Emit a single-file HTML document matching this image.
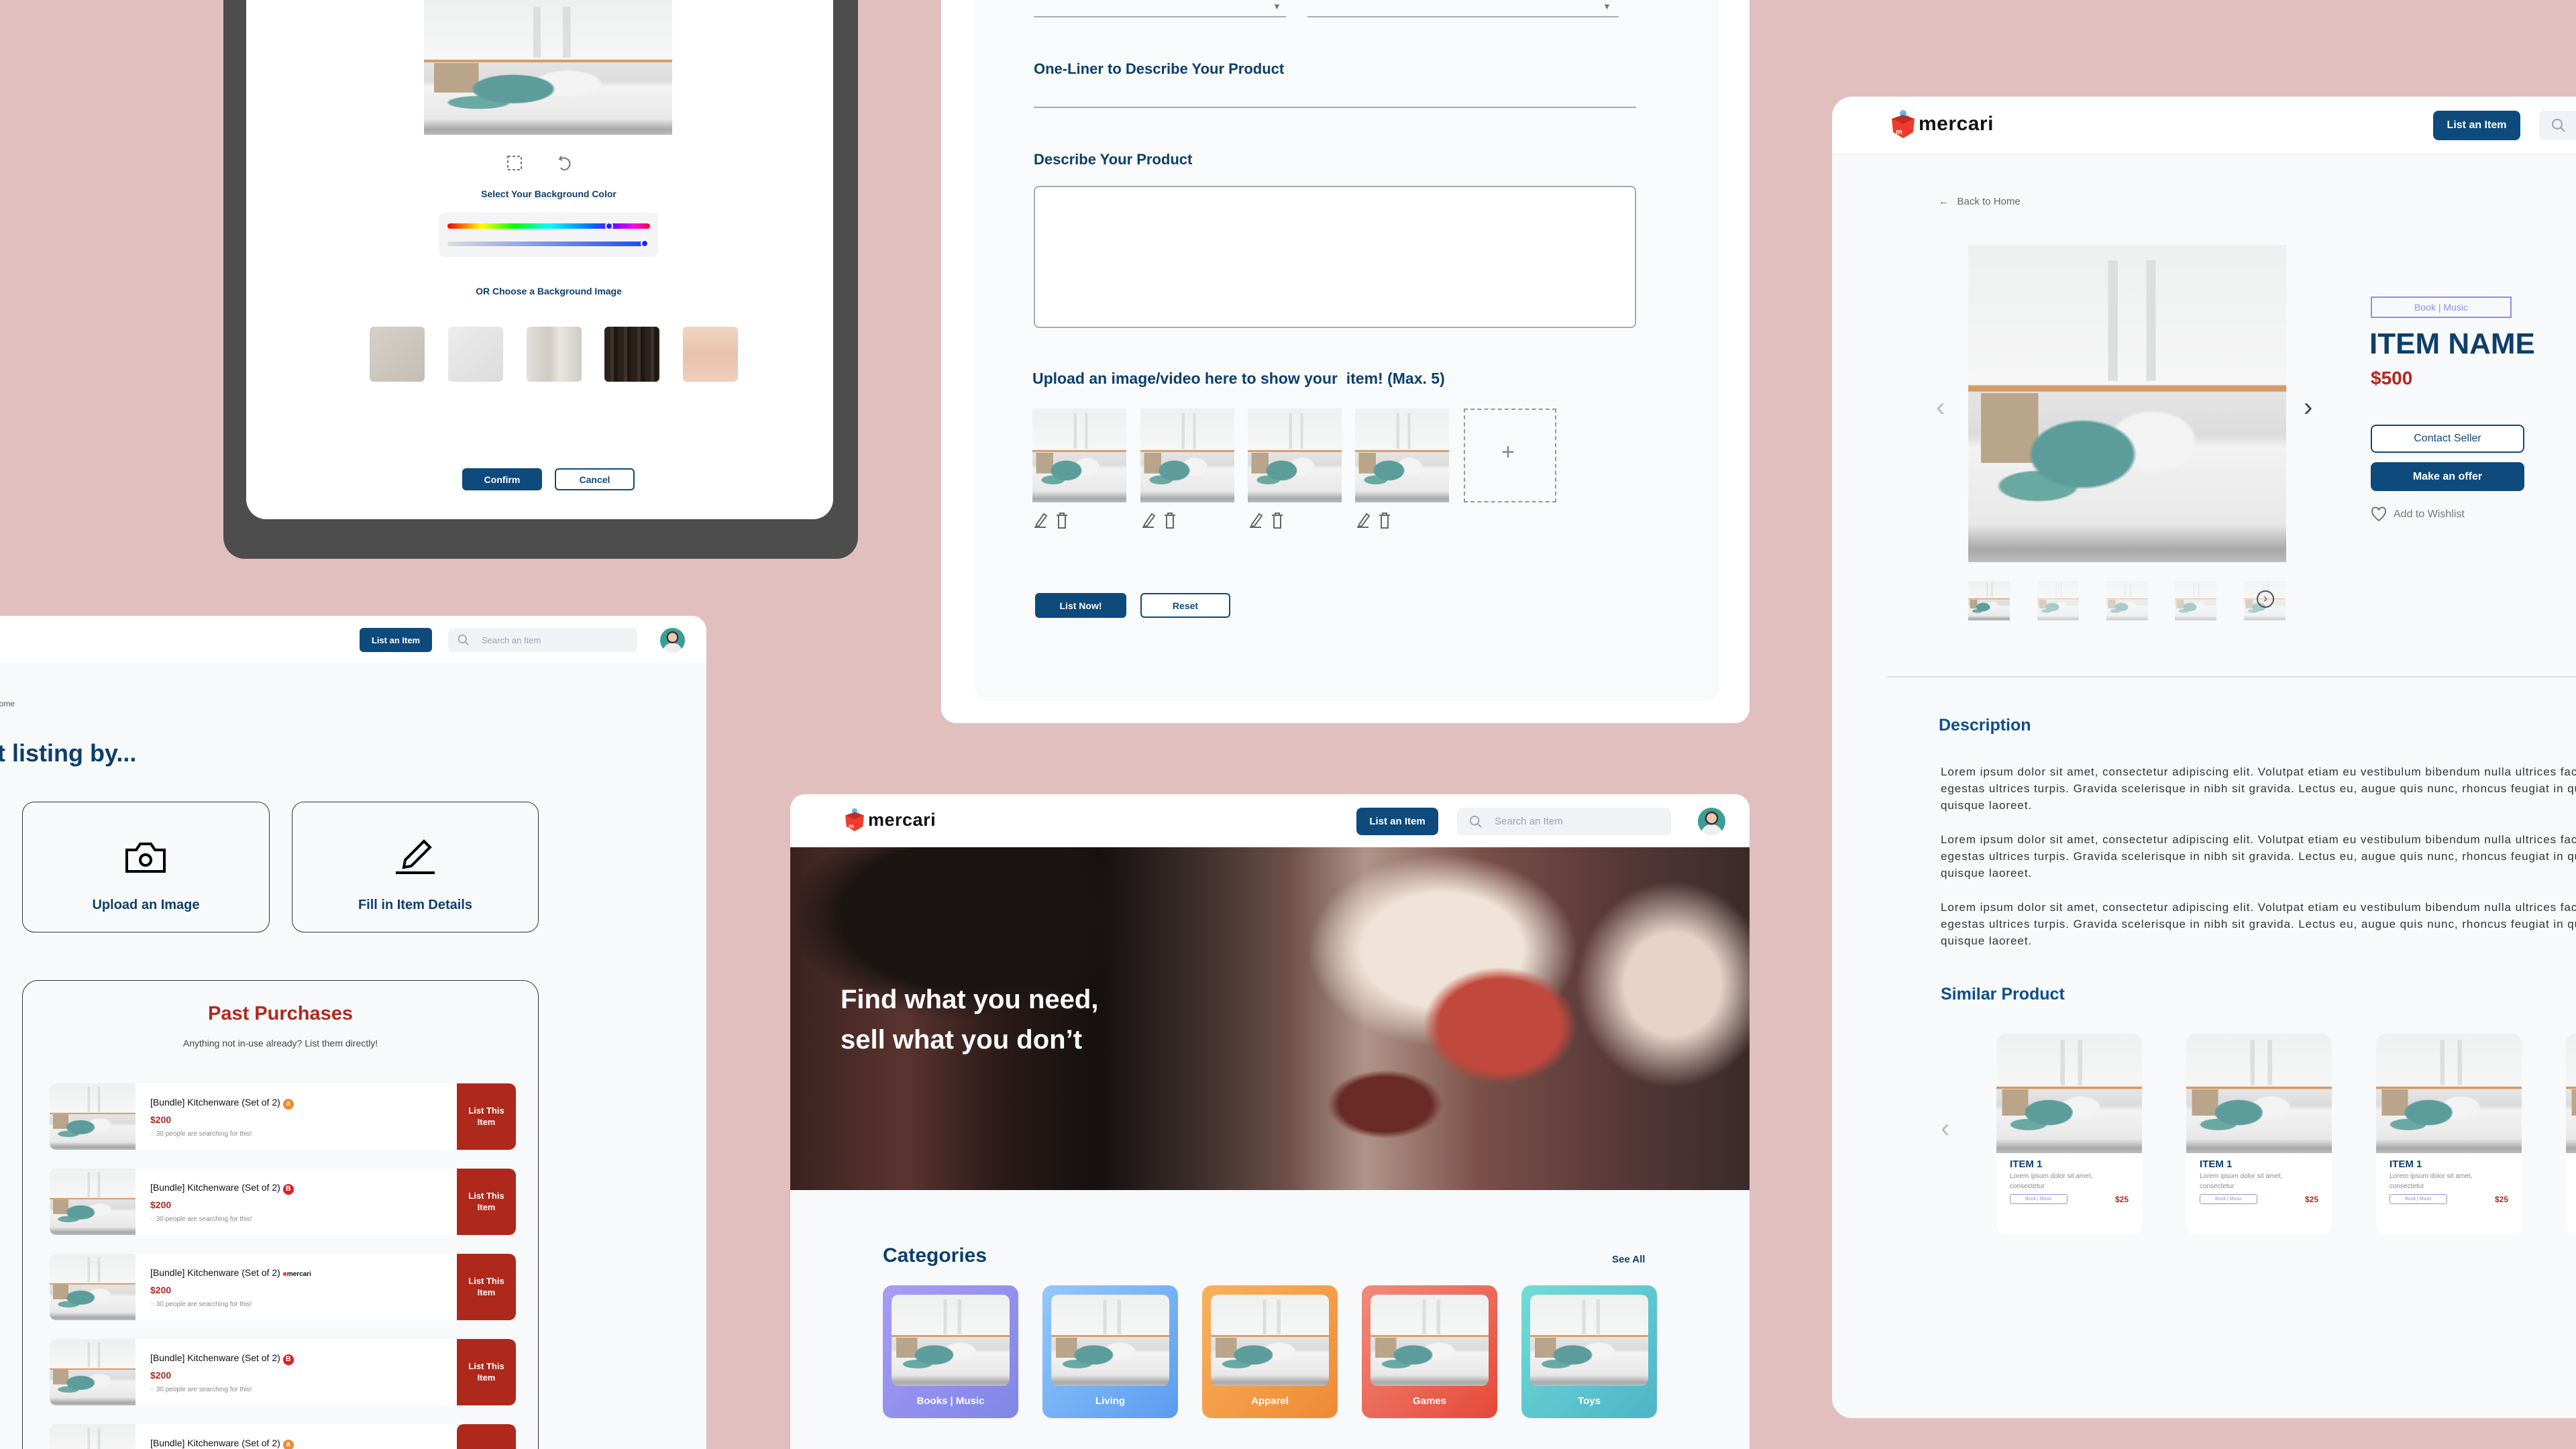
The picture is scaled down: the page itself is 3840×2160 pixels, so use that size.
<!DOCTYPE html>
<html style="width:3840px;height:2160px;overflow:hidden"><head><meta charset="utf-8">
<style>
*{margin:0;padding:0;box-sizing:border-box}
body{width:3840px;height:2160px;background:#e1bfbf;position:relative;overflow:hidden;font-family:"Liberation Sans",sans-serif;color:#0d3f6b}
#root{position:absolute;left:0;top:0;width:3840px;height:2160px;overflow:hidden}
.a{position:absolute}
.kit{background:
 radial-gradient(ellipse 17% 11% at 36% 66%,#5c9c9a 0 92%,transparent 100%),
 radial-gradient(ellipse 14% 10% at 58% 62%,#f3f3f3 0 90%,transparent 100%),
 radial-gradient(ellipse 13% 5% at 22% 76%,#6aa8a2 0 90%,transparent 100%),
 linear-gradient(90deg,transparent 0 4%,#b8a58a 4% 22%,transparent 22%) 14% 60%/100% 22% no-repeat,
 linear-gradient(90deg,transparent 0 44%,#dcdfde 44% 47%,transparent 47% 56%,#dcdfde 56% 59%,transparent 59%) 0 8%/100% 38% no-repeat,
 linear-gradient(180deg,#eef0f0 0%,#f6f6f6 44%,#d49a66 44.5%,#d49a66 46%,#e4e4e4 46.5%,#dcdcdc 60%,#f2f2f2 64%,#e8e8e8 88%,#a8a8a8 96%,#bdbdbd 100%)}
.btn{position:absolute;background:#0e4a7c;color:#fff;font-weight:bold;display:flex;align-items:center;justify-content:center;border-radius:8px}
.obtn{position:absolute;border:2px solid #0e4a7c;color:#0e4a7c;font-weight:bold;display:flex;align-items:center;justify-content:center;border-radius:8px;background:#fff}
.logo{position:absolute;display:flex;align-items:center;gap:4px;font-weight:bold;color:#111;letter-spacing:0.5px}
.srch{position:absolute;background:#f0f2f5;border-radius:8px;color:#9aa3ad;display:flex;align-items:center}
.lbl{font-weight:bold;color:#0d3f6b}
</style></head><body><div id="root">

<!-- Panel A: tablet -->
<div class="a" style="left:333px;top:0;width:946px;height:833px;background:#4d4d4d;border-radius:0 0 32px 32px"></div>
<div class="a" style="left:367px;top:0;width:875px;height:774px;background:#fff;border-radius:0 0 30px 30px"></div>
<div class="a kit" style="left:632px;top:0;width:370px;height:201px"></div>
<svg class="a" style="left:754px;top:230px" width="26" height="26" viewBox="0 0 26 26" fill="none" stroke="#777" stroke-width="2" stroke-dasharray="4 3"><rect x="3" y="3" width="20" height="20"/></svg>
<svg class="a" style="left:829px;top:229px" width="26" height="28" viewBox="0 0 26 28" fill="none" stroke="#777" stroke-width="2"><path d="M8 4 L5 8 L9 10"/><path d="M5 8 Q13 4 19 10 Q23 18 16 23 Q10 26 7 21"/></svg>
<div class="a lbl" style="left:618px;width:400px;top:281px;font-size:14px;text-align:center">Select Your Background Color</div>
<div class="a" style="left:654px;top:317px;width:327px;height:66px;background:#f4f4f4;border-radius:8px"></div>
<div class="a" style="left:667px;top:333px;width:302px;height:8px;border-radius:4px;background:linear-gradient(90deg,#f00,#ff0 17%,#0f0 33%,#0ff 50%,#06f 72%,#70f 82%,#f0f 92%,#f03)"></div>
<div class="a" style="left:902px;top:331px;width:12px;height:12px;border-radius:6px;background:#22f;border:2px solid #fff"></div>
<div class="a" style="left:667px;top:360px;width:294px;height:7px;border-radius:4px;background:linear-gradient(90deg,#ddd,#1a4cf5)"></div>
<div class="a" style="left:955px;top:357px;width:12px;height:12px;border-radius:6px;background:#22f;border:2px solid #fff"></div>
<div class="a lbl" style="left:618px;width:400px;top:426px;font-size:14px;text-align:center">OR Choose a Background Image</div>
<div class="a" style="left:551px;top:487px;width:82px;height:82px;border-radius:6px;background:linear-gradient(135deg,#d6d0c8,#c4bdb4)"></div>
<div class="a" style="left:668px;top:487px;width:82px;height:82px;border-radius:6px;background:linear-gradient(135deg,#ececec,#dcdcdc)"></div>
<div class="a" style="left:785px;top:487px;width:82px;height:82px;border-radius:6px;background:linear-gradient(90deg,#e2e0dc,#cfcac2 40%,#e8e6e2 60%,#d0cbc4)"></div>
<div class="a" style="left:901px;top:487px;width:82px;height:82px;border-radius:6px;background:repeating-linear-gradient(90deg,#2b221c 0 9px,#40322a 9px 14px,#1e1813 14px 20px)"></div>
<div class="a" style="left:1018px;top:487px;width:82px;height:82px;border-radius:6px;background:linear-gradient(180deg,#f2d4c4,#e8c2ac 50%,#f0cfbd)"></div>
<div class="btn" style="left:689px;top:698px;width:119px;height:33px;font-size:14px;border-radius:6px">Confirm</div>
<div class="obtn" style="left:827px;top:698px;width:119px;height:33px;font-size:14px;border-radius:6px">Cancel</div>

<!-- Panel B: form -->
<div class="a" style="left:1403px;top:0;width:1205px;height:1078px;background:#fff;border-radius:0 0 22px 22px"></div>
<div class="a" style="left:1453px;top:0;width:1110px;height:1045px;background:#f9fafb;border-radius:0 0 22px 22px"></div>
<div class="a" style="left:1541px;top:24px;width:376px;height:2px;background:#aaa"></div>
<div class="a" style="left:1949px;top:24px;width:464px;height:2px;background:#aaa"></div>
<div class="a" style="left:1897px;top:2px;font-size:13px;color:#777">▼</div>
<div class="a" style="left:2389px;top:2px;font-size:13px;color:#777">▼</div>
<div class="a lbl" style="left:1541px;top:90px;font-size:22px">One-Liner to Describe Your Product</div>
<div class="a" style="left:1541px;top:159px;width:898px;height:2px;background:#aaa"></div>
<div class="a lbl" style="left:1541px;top:225px;font-size:22px">Describe Your Product</div>
<div class="a" style="left:1541px;top:277px;width:898px;height:212px;border:2px solid #aaa;border-radius:8px;background:#fff"></div>
<div class="a lbl" style="left:1539px;top:551px;font-size:23px">Upload an image/video here to show your&nbsp; item! (Max. 5)</div>
<div class="a kit" style="left:1539px;top:609px;width:140px;height:140px"></div>
<div class="a kit" style="left:1700px;top:609px;width:140px;height:140px"></div>
<div class="a kit" style="left:1860px;top:609px;width:140px;height:140px"></div>
<div class="a kit" style="left:2020px;top:609px;width:140px;height:140px"></div>
<div class="a" style="left:2182px;top:609px;width:138px;height:140px;border:2px dashed #999"></div>
<div class="a" style="left:2238px;top:655px;font-size:34px;color:#888">+</div>
<svg class="a" style="left:1539px;top:760px" width="60" height="30" viewBox="0 0 60 30" fill="none" stroke="#666" stroke-width="2"><path d="M3 26 H20 M6 22 L17 6 L21 9 L10 24 L5 25 Z"/><path d="M36 8 H52 M39 8 V27 H49 V8 M41 8 V5 H47 V8"/></svg>
<svg class="a" style="left:1700px;top:760px" width="60" height="30" viewBox="0 0 60 30" fill="none" stroke="#666" stroke-width="2"><path d="M3 26 H20 M6 22 L17 6 L21 9 L10 24 L5 25 Z"/><path d="M36 8 H52 M39 8 V27 H49 V8 M41 8 V5 H47 V8"/></svg>
<svg class="a" style="left:1860px;top:760px" width="60" height="30" viewBox="0 0 60 30" fill="none" stroke="#666" stroke-width="2"><path d="M3 26 H20 M6 22 L17 6 L21 9 L10 24 L5 25 Z"/><path d="M36 8 H52 M39 8 V27 H49 V8 M41 8 V5 H47 V8"/></svg>
<svg class="a" style="left:2020px;top:760px" width="60" height="30" viewBox="0 0 60 30" fill="none" stroke="#666" stroke-width="2"><path d="M3 26 H20 M6 22 L17 6 L21 9 L10 24 L5 25 Z"/><path d="M36 8 H52 M39 8 V27 H49 V8 M41 8 V5 H47 V8"/></svg>
<div class="btn" style="left:1543px;top:884px;width:136px;height:37px;font-size:14px;border-radius:6px">List Now!</div>
<div class="obtn" style="left:1700px;top:884px;width:134px;height:37px;font-size:14px;border-radius:6px">Reset</div>

<!-- Panel C: product detail -->
<div class="a" style="left:2731px;top:144px;width:1200px;height:1970px;background:#f8f9fb;border-radius:30px;overflow:hidden">
 <div class="a" style="left:0;top:0;width:1200px;height:84px;background:#fff;box-shadow:0 2px 6px rgba(0,0,0,.04)"></div>
</div>
<div class="logo" style="left:2818px;top:163px;font-size:30px">
 <svg width="38" height="44" viewBox="0 0 38 44"><circle cx="19" cy="6" r="5" fill="#5bbcf2"/><circle cx="25" cy="13" r="4" fill="#5bbcf2"/><path d="M2 14 L19 22 L36 14 L34 34 L19 43 L4 34 Z" fill="#ee3b2b"/><path d="M2 14 L19 22 L36 14 L19 8 Z" fill="#c92a1f"/><text x="8" y="37" font-size="11" fill="#fff" font-family="Liberation Sans">m</text></svg>mercari</div>
<div class="btn" style="left:3627px;top:165px;width:130px;height:44px;font-size:16px">List an Item</div>
<div class="srch" style="left:3785px;top:165px;width:120px;height:44px;padding-left:18px"><svg width="22" height="22" viewBox="0 0 22 22" fill="none" stroke="#9aa3ad" stroke-width="2"><circle cx="9" cy="9" r="7"/><path d="M14 14 L20 20"/></svg></div>
<div class="a" style="left:2890px;top:292px;font-size:15px;color:#666">←&nbsp;&nbsp;&nbsp;Back to Home</div>
<div class="a kit" style="left:2934px;top:365px;width:474px;height:473px"></div>
<div class="a" style="left:2886px;top:585px;font-size:40px;color:#bbb;font-weight:100">‹</div>
<div class="a" style="left:3434px;top:585px;font-size:40px;color:#444">›</div>
<div class="a kit" style="left:2934px;top:866px;width:62px;height:59px"></div>
<div class="a kit" style="left:3037px;top:866px;width:62px;height:59px;opacity:.5"></div>
<div class="a kit" style="left:3140px;top:866px;width:62px;height:59px;opacity:.5"></div>
<div class="a kit" style="left:3242px;top:866px;width:62px;height:59px;opacity:.5"></div>
<div class="a kit" style="left:3345px;top:866px;width:62px;height:59px;opacity:.5"></div>
<div class="a" style="left:3364px;top:880px;width:26px;height:26px;border:2px solid #555;border-radius:13px;font-size:18px;line-height:20px;text-align:center;color:#555">›</div>
<div class="a" style="left:3534px;top:442px;width:210px;height:32px;border:2px solid #8d91e6;color:#8d91e6;font-size:14px;display:flex;align-items:center;justify-content:center">Book | Music</div>
<div class="a" style="left:3532px;top:488px;font-size:44px;font-weight:bold;color:#0d3f6b">ITEM NAME</div>
<div class="a" style="left:3534px;top:548px;font-size:28px;font-weight:bold;color:#b3261e">$500</div>
<div class="obtn" style="left:3534px;top:633px;width:229px;height:42px;font-size:16px;font-weight:normal;background:#fff">Contact Seller</div>
<div class="btn" style="left:3534px;top:689px;width:229px;height:43px;font-size:16px">Make an offer</div>
<div class="a" style="left:3534px;top:755px;font-size:16px;color:#777;display:flex;align-items:center;gap:10px"><svg width="24" height="24" viewBox="0 0 24 24" fill="none" stroke="#777" stroke-width="2"><path d="M12 21 C4 14 2 11 2 7.5 A5 5 0 0 1 12 5.5 A5 5 0 0 1 22 7.5 C22 11 20 14 12 21Z"/></svg>Add to Wishlist</div>
<div class="a" style="left:2813px;top:1008px;width:1027px;height:2px;background:#ddd"></div>
<div class="a" style="left:2890px;top:1067px;font-size:25px;font-weight:bold;color:#0e4f86">Description</div>
<div class="a" style="left:2893px;top:1138px;width:1050px;font-size:17px;letter-spacing:0.95px;line-height:25px;color:#333">
<p>Lorem ipsum dolor sit amet, consectetur adipiscing elit. Volutpat etiam eu vestibulum bibendum nulla ultrices facilisis egestas ultrices turpis. Gravida scelerisque in nibh sit gravida. Lectus eu, augue quis nunc, rhoncus feugiat in quis id quis quisque laoreet.</p>
<p style="margin-top:26px">Lorem ipsum dolor sit amet, consectetur adipiscing elit. Volutpat etiam eu vestibulum bibendum nulla ultrices facilisis egestas ultrices turpis. Gravida scelerisque in nibh sit gravida. Lectus eu, augue quis nunc, rhoncus feugiat in quis id quis quisque laoreet.</p>
<p style="margin-top:26px">Lorem ipsum dolor sit amet, consectetur adipiscing elit. Volutpat etiam eu vestibulum bibendum nulla ultrices facilisis egestas ultrices turpis. Gravida scelerisque in nibh sit gravida. Lectus eu, augue quis nunc, rhoncus feugiat in quis id quis quisque laoreet.</p>
</div>
<div class="a" style="left:2893px;top:1468px;font-size:25px;font-weight:bold;color:#0e4f86">Similar Product</div>
<div class="a" style="left:2893px;top:1660px;font-size:40px;color:#bbb">‹</div>

<div class="a" style="left:2976px;top:1541px;width:217px;height:299px;background:#fff;border-radius:14px;overflow:hidden"><div class="kit" style="height:178px"></div>
<div style="padding:8px 20px 0;font-size:15px;font-weight:bold;color:#0d3f6b">ITEM 1</div><div style="padding:2px 20px 0;font-size:10px;line-height:15px;color:#888">Lorem ipsum dolor sit amet,<br>consectetur</div>
<div style="margin:4px 20px 0;display:flex;justify-content:space-between;align-items:center"><span style="border:1px solid #8d91e6;color:#8d91e6;font-size:7px;width:86px;height:15px;border-radius:3px;text-align:center;line-height:13px">Book | Music</span><span style="color:#b3261e;font-size:12px;font-weight:bold">$25</span></div></div>
<div class="a" style="left:3259px;top:1541px;width:217px;height:299px;background:#fff;border-radius:14px;overflow:hidden"><div class="kit" style="height:178px"></div>
<div style="padding:8px 20px 0;font-size:15px;font-weight:bold;color:#0d3f6b">ITEM 1</div><div style="padding:2px 20px 0;font-size:10px;line-height:15px;color:#888">Lorem ipsum dolor sit amet,<br>consectetur</div>
<div style="margin:4px 20px 0;display:flex;justify-content:space-between;align-items:center"><span style="border:1px solid #8d91e6;color:#8d91e6;font-size:7px;width:86px;height:15px;border-radius:3px;text-align:center;line-height:13px">Book | Music</span><span style="color:#b3261e;font-size:12px;font-weight:bold">$25</span></div></div>
<div class="a" style="left:3542px;top:1541px;width:217px;height:299px;background:#fff;border-radius:14px;overflow:hidden"><div class="kit" style="height:178px"></div>
<div style="padding:8px 20px 0;font-size:15px;font-weight:bold;color:#0d3f6b">ITEM 1</div><div style="padding:2px 20px 0;font-size:10px;line-height:15px;color:#888">Lorem ipsum dolor sit amet,<br>consectetur</div>
<div style="margin:4px 20px 0;display:flex;justify-content:space-between;align-items:center"><span style="border:1px solid #8d91e6;color:#8d91e6;font-size:7px;width:86px;height:15px;border-radius:3px;text-align:center;line-height:13px">Book | Music</span><span style="color:#b3261e;font-size:12px;font-weight:bold">$25</span></div></div>
<div class="a" style="left:3825px;top:1541px;width:217px;height:299px;background:#fff;border-radius:14px;overflow:hidden"><div class="kit" style="height:178px"></div></div>

<!-- Panel D: listing -->
<div class="a" style="left:-30px;top:918px;width:1083px;height:1300px;background:#f8f9fb;border-radius:22px;overflow:hidden">
 <div class="a" style="left:0;top:0;width:1083px;height:70px;background:#fff"></div>
</div>
<div class="btn" style="left:536px;top:936px;width:108px;height:36px;font-size:13px;border-radius:6px">List an Item</div>
<div class="srch" style="left:668px;top:936px;width:282px;height:36px;font-size:13px;padding-left:14px;gap:18px"><svg width="18" height="18" viewBox="0 0 22 22" fill="none" stroke="#9aa3ad" stroke-width="2"><circle cx="9" cy="9" r="7"/><path d="M14 14 L20 20"/></svg>Search an Item</div>
<div class="a" style="left:984px;top:936px;width:37px;height:37px;border-radius:50%;background:radial-gradient(circle at 50% 38%,#e9c9b3 0 22%,#4a3028 23% 30%,transparent 31%),radial-gradient(circle at 50% 100%,#eee 0 35%,transparent 36%),#3b9e95"></div>
<div class="a" style="left:-10px;top:1042px;font-size:12px;color:#555">Home</div>
<div class="a" style="left:-4px;top:1102px;font-size:36px;font-weight:bold;color:#0d3f6b">t listing by...</div>
<div class="a" style="left:33px;top:1195px;width:369px;height:195px;border:1.5px solid #333;border-radius:18px;background:#f8f9fb"></div>
<div class="a" style="left:435px;top:1195px;width:368px;height:195px;border:1.5px solid #333;border-radius:18px;background:#f8f9fb"></div>
<svg class="a" style="left:185px;top:1253px" width="64" height="50" viewBox="0 0 64 50" fill="none" stroke="#000" stroke-width="4"><path d="M4 14 H18 L24 5 H40 L46 14 H60 V46 H4 Z"/><circle cx="32" cy="29" r="8"/></svg>
<svg class="a" style="left:588px;top:1250px" width="62" height="54" viewBox="0 0 62 54" fill="none" stroke="#000" stroke-width="4"><path d="M2 51 H60"/><path d="M14 43 L16 32 L44 4 L53 13 L25 41 Z"/></svg>
<div class="a" style="left:33px;width:369px;top:1338px;text-align:center;font-size:20px;font-weight:bold;color:#0d3f6b">Upload an Image</div>
<div class="a" style="left:435px;width:368px;top:1338px;text-align:center;font-size:20px;font-weight:bold;color:#0d3f6b">Fill in Item Details</div>
<div class="a" style="left:33px;top:1461px;width:770px;height:800px;border:1.5px solid #333;border-radius:24px;background:#f8f9fb"></div>
<div class="a" style="left:33px;width:770px;top:1495px;text-align:center;font-size:29px;font-weight:bold;color:#b0281e">Past Purchases</div>
<div class="a" style="left:33px;width:770px;top:1547px;text-align:center;font-size:14px;color:#444">Anything not in-use already? List them directly!</div>

<div class="a" style="left:74px;top:1615px;width:695px;height:99px;background:#fff;border-radius:10px;overflow:hidden"><div class="kit a" style="left:0;top:0;width:128px;height:99px"></div><div class="a" style="left:150px;top:20px;font-size:14px;color:#111">[Bundle] Kitchenware (Set of 2) <span style="display:inline-block;width:16px;height:16px;border-radius:8px;background:#f08a2c;color:#fff;font-size:11px;text-align:center;line-height:15px;font-weight:bold">a</span></div><div class="a" style="left:150px;top:46px;font-size:14px;font-weight:bold;color:#b3261e">$200</div><div class="a" style="left:150px;top:70px;font-size:10px;color:#888">◌ 30 people are searching for this!</div><div class="a" style="right:0;top:0;width:88px;height:99px;background:#ae281c;border-radius:0 10px 10px 0;color:#fff;font-weight:bold;font-size:13px;text-align:center;padding-top:32px;line-height:17px">List This<br>Item</div></div>
<div class="a" style="left:74px;top:1742px;width:695px;height:99px;background:#fff;border-radius:10px;overflow:hidden"><div class="kit a" style="left:0;top:0;width:128px;height:99px"></div><div class="a" style="left:150px;top:20px;font-size:14px;color:#111">[Bundle] Kitchenware (Set of 2) <span style="display:inline-block;width:16px;height:16px;border-radius:8px;background:#e31b23;color:#fff;font-size:11px;text-align:center;line-height:15px;font-weight:bold">B</span></div><div class="a" style="left:150px;top:46px;font-size:14px;font-weight:bold;color:#b3261e">$200</div><div class="a" style="left:150px;top:70px;font-size:10px;color:#888">◌ 30 people are searching for this!</div><div class="a" style="right:0;top:0;width:88px;height:99px;background:#ae281c;border-radius:0 10px 10px 0;color:#fff;font-weight:bold;font-size:13px;text-align:center;padding-top:32px;line-height:17px">List This<br>Item</div></div>
<div class="a" style="left:74px;top:1869px;width:695px;height:99px;background:#fff;border-radius:10px;overflow:hidden"><div class="kit a" style="left:0;top:0;width:128px;height:99px"></div><div class="a" style="left:150px;top:20px;font-size:14px;color:#111">[Bundle] Kitchenware (Set of 2) <span style="font-size:10px;font-weight:bold;color:#111"><span style="color:#ee3b2b">■</span>mercari</span></div><div class="a" style="left:150px;top:46px;font-size:14px;font-weight:bold;color:#b3261e">$200</div><div class="a" style="left:150px;top:70px;font-size:10px;color:#888">◌ 30 people are searching for this!</div><div class="a" style="right:0;top:0;width:88px;height:99px;background:#ae281c;border-radius:0 10px 10px 0;color:#fff;font-weight:bold;font-size:13px;text-align:center;padding-top:32px;line-height:17px">List This<br>Item</div></div>
<div class="a" style="left:74px;top:1996px;width:695px;height:99px;background:#fff;border-radius:10px;overflow:hidden"><div class="kit a" style="left:0;top:0;width:128px;height:99px"></div><div class="a" style="left:150px;top:20px;font-size:14px;color:#111">[Bundle] Kitchenware (Set of 2) <span style="display:inline-block;width:16px;height:16px;border-radius:8px;background:#e31b23;color:#fff;font-size:11px;text-align:center;line-height:15px;font-weight:bold">B</span></div><div class="a" style="left:150px;top:46px;font-size:14px;font-weight:bold;color:#b3261e">$200</div><div class="a" style="left:150px;top:70px;font-size:10px;color:#888">◌ 30 people are searching for this!</div><div class="a" style="right:0;top:0;width:88px;height:99px;background:#ae281c;border-radius:0 10px 10px 0;color:#fff;font-weight:bold;font-size:13px;text-align:center;padding-top:32px;line-height:17px">List This<br>Item</div></div>
<div class="a" style="left:74px;top:2123px;width:695px;height:99px;background:#fff;border-radius:10px;overflow:hidden"><div class="kit a" style="left:0;top:0;width:128px;height:99px"></div><div class="a" style="left:150px;top:20px;font-size:14px;color:#111">[Bundle] Kitchenware (Set of 2) <span style="display:inline-block;width:16px;height:16px;border-radius:8px;background:#f08a2c;color:#fff;font-size:11px;text-align:center;line-height:15px;font-weight:bold">a</span></div><div class="a" style="right:0;top:0;width:88px;height:99px;background:#ae281c;border-radius:10px 10px 0 0"></div></div>

<!-- Panel E: home -->
<div class="a" style="left:1178px;top:1184px;width:1430px;height:1050px;background:#f8f9fb;border-radius:22px 22px 0 0;overflow:hidden">
 <div class="a" style="left:0;top:0;width:1430px;height:79px;background:#fff"></div>
 <div class="a" style="left:0;top:79px;width:1430px;height:511px;background:
  radial-gradient(ellipse 8% 17% at 74% 52%,#c0483c 0 80%,transparent 100%),
  radial-gradient(ellipse 6% 10% at 62% 75%,#6a2a26 0 80%,transparent 100%),
  radial-gradient(ellipse 14% 28% at 68% 30%,#efe2d6 0 60%,transparent 100%),
  radial-gradient(ellipse 10% 30% at 92% 40%,#e6d2c6 0 50%,transparent 100%),
  radial-gradient(ellipse 18% 30% at 18% 20%,#1a1412 0 70%,transparent 100%),
  linear-gradient(90deg,#3a2220 0%,#5a3430 12%,#2a1a18 22%,#151010 32%,#3a2c2a 42%,#6e5048 52%,#b09488 60%,#7a5048 72%,#5a3a3a 85%,#3a2a2a 100%)"></div>
</div>
<div class="logo" style="left:1258px;top:1204px;font-size:27px">
 <svg width="32" height="36" viewBox="0 0 38 44"><circle cx="19" cy="6" r="5" fill="#5bbcf2"/><circle cx="25" cy="13" r="4" fill="#5bbcf2"/><path d="M2 14 L19 22 L36 14 L34 34 L19 43 L4 34 Z" fill="#ee3b2b"/><path d="M2 14 L19 22 L36 14 L19 8 Z" fill="#c92a1f"/><text x="8" y="37" font-size="11" fill="#fff" font-family="Liberation Sans">m</text></svg>mercari</div>
<div class="btn" style="left:2022px;top:1204px;width:122px;height:41px;font-size:15px">List an Item</div>
<div class="srch" style="left:2172px;top:1204px;width:319px;height:41px;font-size:15px;padding-left:18px;gap:18px"><svg width="20" height="20" viewBox="0 0 22 22" fill="none" stroke="#9aa3ad" stroke-width="2"><circle cx="9" cy="9" r="7"/><path d="M14 14 L20 20"/></svg>Search an Item</div>
<div class="a" style="left:2531px;top:1204px;width:41px;height:41px;border-radius:50%;background:radial-gradient(circle at 50% 38%,#e9c9b3 0 22%,#4a3028 23% 30%,transparent 31%),radial-gradient(circle at 50% 100%,#eee 0 35%,transparent 36%),#3b9e95"></div>
<div class="a" style="left:1253px;top:1460px;font-size:40px;font-weight:bold;color:#fff;line-height:60px">Find what you need,<br>sell what you don’t</div>
<div class="a" style="left:1316px;top:1855px;font-size:30px;font-weight:bold;color:#0d3f6b">Categories</div>
<div class="a" style="left:2403px;top:1869px;font-size:15px;font-weight:bold;color:#0d3f6b">See All</div>

<div class="a" style="left:1316px;top:1916px;width:202px;height:198px;border-radius:14px;background:linear-gradient(135deg,#a89cf5,#7f86e6)"><div class="kit a" style="left:13px;top:14px;width:176px;height:136px;border-radius:10px"></div><div class="a" style="left:0;width:202px;top:164px;text-align:center;color:#fff;font-weight:bold;font-size:15px">Books | Music</div></div>
<div class="a" style="left:1554px;top:1916px;width:202px;height:198px;border-radius:14px;background:linear-gradient(135deg,#94c8fb,#5b9cf0)"><div class="kit a" style="left:13px;top:14px;width:176px;height:136px;border-radius:10px"></div><div class="a" style="left:0;width:202px;top:164px;text-align:center;color:#fff;font-weight:bold;font-size:15px">Living</div></div>
<div class="a" style="left:1792px;top:1916px;width:202px;height:198px;border-radius:14px;background:linear-gradient(135deg,#f8b25c,#ef8a36)"><div class="kit a" style="left:13px;top:14px;width:176px;height:136px;border-radius:10px"></div><div class="a" style="left:0;width:202px;top:164px;text-align:center;color:#fff;font-weight:bold;font-size:15px">Apparel</div></div>
<div class="a" style="left:2030px;top:1916px;width:202px;height:198px;border-radius:14px;background:linear-gradient(135deg,#f08c7c,#e64838)"><div class="kit a" style="left:13px;top:14px;width:176px;height:136px;border-radius:10px"></div><div class="a" style="left:0;width:202px;top:164px;text-align:center;color:#fff;font-weight:bold;font-size:15px">Games</div></div>
<div class="a" style="left:2268px;top:1916px;width:202px;height:198px;border-radius:14px;background:linear-gradient(135deg,#72dcd8,#4cb4c6)"><div class="kit a" style="left:13px;top:14px;width:176px;height:136px;border-radius:10px"></div><div class="a" style="left:0;width:202px;top:164px;text-align:center;color:#fff;font-weight:bold;font-size:15px">Toys</div></div>

</div></body></html>
